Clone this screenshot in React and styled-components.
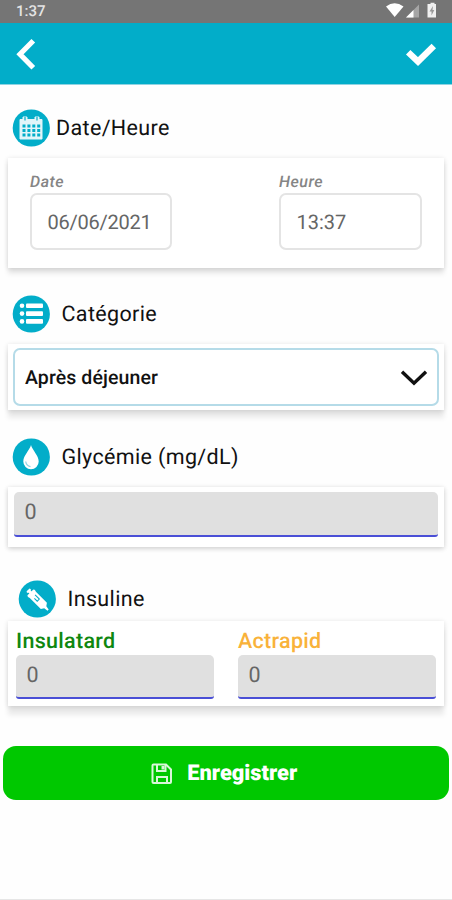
import React from 'react';
import styled, { createGlobalStyle, ThemeProvider } from 'styled-components';

const theme = {
  primary: '#02adc9',
  status: '#757575',
  grey: '#e0e0e0',
  underline: '#4a4fd6',
  success: '#00c800',
};

const GlobalStyle = createGlobalStyle`
  * {
    box-sizing: border-box;
  }

  body {
    margin: 0;
    background: #fefefe;
    font-family: Roboto, 'Liberation Sans', sans-serif;
    text-rendering: geometricPrecision;
  }
`;

const StyledScreen = styled.div`
  display: flex;
  flex-direction: column;
  width: 452px;
  height: 900px;
  overflow: hidden;
  border-bottom: 1px solid #e6e6e6;
`;

const StyledStatusBar = styled.div`
  display: flex;
  justify-content: space-between;
  flex: none;
  height: 23px;
  padding: 0 15px 0 16px;
  background: ${({ theme }) => theme.status};
  color: #e4e4e4;
  font-size: 15px;
  font-weight: 500;
  line-height: 22px;
`;

const StyledHeader = styled.header`
  display: flex;
  justify-content: space-between;
  flex: none;
  height: 62px;
  padding: 15px 14px 0 15px;
  background: ${({ theme }) => theme.primary};
  border-bottom: 1px solid #8fd3e2;
`;

const StyledForm = styled.form`
  display: flex;
  flex-direction: column;
  padding: 0 8px;
`;

const StyledHeading = styled.div`
  display: flex;
  align-items: center;
  gap: ${({ $gap }) => $gap || 11.5}px;
  height: 38px;
  margin: ${({ $margin }) => $margin};
`;

const StyledTitle = styled.h2`
  margin: 0;
  color: #111;
  font-size: 21.5px;
  font-weight: 400;
  line-height: 38px;
  letter-spacing: 0.35px;
  padding-top: 1px;
`;

const StyledCard = styled.section`
  display: flex;
  justify-content: space-between;
  height: ${({ $height }) => $height}px;
  padding: ${({ $padding }) => $padding};
  background: #fff;
  box-shadow: 0 1px 5px rgba(0, 0, 0, 0.14),
    0 ${({ $depth }) => $depth || 6}px 5px rgba(0, 0, 0, 0.08);
`;

const StyledField = styled.div`
  display: flex;
  flex-direction: column;
  width: ${({ $width }) => $width}px;
`;

const StyledLabel = styled.label`
  color: #858585;
  font-size: 16px;
  font-style: italic;
  font-weight: 500;
  line-height: 20px;
  letter-spacing: 0.5px;
`;

const StyledDose = styled.label`
  color: ${({ $color }) => $color};
  font-size: 21.5px;
  font-weight: 500;
  line-height: 30px;
  height: 28px;
  letter-spacing: 0.3px;
`;

const StyledPicker = styled.div`
  height: 57px;
  margin-top: 1px;
  padding-left: 15.5px;
  border: 2px solid #e4e4e4;
  border-radius: 7px;
  color: #666;
  font-size: 20px;
  line-height: 54px;
  letter-spacing: ${({ $spacing }) => $spacing || 0}px;
`;

const StyledSelect = styled.div`
  display: flex;
  align-items: center;
  justify-content: space-between;
  flex: 1;
  padding: 1px 9px 0 10px;
  border: 2px solid #b5dbe8;
  border-radius: 7px;
  color: #111;
  font-size: 19.5px;
  font-weight: 500;
  letter-spacing: 0.1px;
`;

const StyledNumber = styled.div`
  height: ${({ $height }) => $height}px;
  padding-left: 10.5px;
  background: ${({ theme }) => theme.grey};
  border-bottom: 2px solid ${({ theme }) => theme.underline};
  border-radius: 5px 5px 3px 3px;
  color: #666;
  font-size: 21.5px;
  line-height: 42px;
`;

const StyledButton = styled.button`
  display: flex;
  align-items: center;
  justify-content: center;
  gap: 14px;
  height: 54px;
  margin: 39.5px -5px 0 -5.5px;
  padding: 2px 3px 0 0;
  border: 0;
  border-radius: 13px;
  background: ${({ theme }) => theme.success};
  color: #fff;
  font-family: inherit;
  font-size: 21.8px;
  font-weight: 900;
  text-rendering: inherit;
`;

const StatusIcons = () => (
  <svg width="54" height="22" viewBox="0 0 54 22">
    <path d="M3 6.5 Q11.5 0 20.500 6.500 L11.700 17 Z" fill="#fff" />
    <path d="M36 4.500 V17.500 H23 Z" fill="#a5a5a5" />
    <path d="M30.500 10 V17.500 H23 Z" fill="#fff" />
    <path d="M46 4 H47.500 V2.800 H51.500 V4 H53 V17.500 H44.500 V4 Z" fill="#f0f0f0" />
    <path d="M50 6 L46.500 11.500 H48.500 V15.500 L51.300 10 H49.500 Z" fill="#999" />
  </svg>
);

const BackIcon = () => (
  <svg width="24" height="34" viewBox="0 0 24 34">
    <path d="M18.300 2.800 L5 16.300 L18.300 29.800" fill="none" stroke="#fff" strokeWidth="5.200" />
  </svg>
);

const CheckIcon = () => (
  <svg width="34" height="34" viewBox="0 0 34 34">
    <path d="M4.200 14.200 L14 23.500 L29.800 8" fill="none" stroke="#fff" strokeWidth="6.400" />
  </svg>
);

const Badge = ({ children }) => (
  <svg width="38" height="38" viewBox="0 0 38 38">
    <circle cx="19.300" cy="19" r="18.600" fill={theme.primary} />
    {children}
  </svg>
);

const columns = [10.5, 15.4, 20.3, 25.2];
const rows = [15.5, 20, 24.5];

const CalendarIcon = () => (
  <Badge>
    <path
      d="M8 10.500 H11 V8 H15 V10.500 H23 V8 H27 V10.500 H30 V30 H8 Z"
      fill="#e2f5f9"
      stroke="#e2f5f9"
      strokeLinejoin="round"
    />
    <path d="M13 8 V11.500 M25 8 V11.500" stroke={theme.primary} strokeWidth="1.200" />
    {rows.map((y) =>
      columns.map((x) => (
        <rect key={`${x}-${y}`} x={x} y={y} width="3" height="3" fill={theme.primary} />
      ))
    )}
  </Badge>
);

const ListIcon = () => (
  <Badge>
    {[10.8, 18.6, 26.4].map((y) => (
      <g key={y} fill="#fff">
        <circle cx="10" cy={y} r="2.300" />
        <rect x="14" y={y - 2.3} width="17" height="4.600" rx="1" />
      </g>
    ))}
  </Badge>
);

const DropIcon = () => (
  <Badge>
    <path
      d="M19 7 C17.800 12 11.300 17.500 11.300 23.500 A7.700 7.700 0 0 0 26.700 23.500 C26.700 17.500 20.200 12 19 7 Z"
      fill="#fff"
    />
    <path d="M13.700 23.500 Q14.300 27.800 18.500 28.700" fill="none" stroke="#8fd3e2" strokeWidth="1.200" />
  </Badge>
);

const SyringeIcon = () => (
  <Badge>
    <g transform="translate(19.500 19.500) rotate(45)" fill="#fff">
      <rect x="-13.500" y="-2.500" width="2.200" height="5" rx="1" />
      <rect x="-12.500" y="-1.500" width="4" height="3" />
      <rect x="-10" y="-4.800" width="3" height="9.600" rx="1" />
      <path d="M-8 -4.300 H9 L11 -1.500 L15 -0.800 V0.800 L11 1.500 L9 4.300 H-8 Z" />
      <path d="M-5 -1.600 H1 V1.400 H-3" fill="none" stroke={theme.primary} strokeWidth="1" />
    </g>
  </Badge>
);

const ChevronIcon = () => (
  <svg width="28" height="18" viewBox="0 0 28 18">
    <path d="M2 2.700 L14 14.200 L26 2.700" fill="none" stroke="#111" strokeWidth="3.400" />
  </svg>
);

const SaveIcon = () => (
  <svg width="22" height="22" viewBox="0 0 22 22" fill="none" stroke="#d9f7d9" strokeWidth="2">
    <path d="M2.500 1.500 H15 L20 6.500 V19 Q20 20 19 20 H2.500 Q1.500 20 1.500 19 V2.500 Q1.500 1.500 2.500 1.500 Z" />
    <path d="M6 1.500 V8 H14.500 V1.500" />
    <path d="M6 20 V14 H16 V20" />
    <path d="M12 3 V6.500" strokeWidth="3" />
  </svg>
);

const App = () => {
  return (
    <ThemeProvider theme={theme}>
      <GlobalStyle />
      <StyledScreen>
        <StyledStatusBar>
          <span>1:37</span>
          <StatusIcons />
        </StyledStatusBar>
        <StyledHeader>
          <BackIcon />
          <CheckIcon />
        </StyledHeader>
        <StyledForm>
          <StyledHeading $gap={6} $margin="24px 0 11px 4px">
            <CalendarIcon />
            <StyledTitle>Date/Heure</StyledTitle>
          </StyledHeading>
          <StyledCard $height={110} $padding="14px 22px 0 22px">
            <StyledField $width={142}>
              <StyledLabel>Date</StyledLabel>
              <StyledPicker $spacing={-0.25}>06/06/2021</StyledPicker>
            </StyledField>
            <StyledField $width={143}>
              <StyledLabel>Heure</StyledLabel>
              <StyledPicker>13:37</StyledPicker>
            </StyledField>
          </StyledCard>
          <StyledHeading $margin="27px 0 11px 4px">
            <ListIcon />
            <StyledTitle>Catégorie</StyledTitle>
          </StyledHeading>
          <StyledCard $height={66} $padding="4px 5px" $depth={8}>
            <StyledSelect>
              <span>Après déjeuner</span>
              <ChevronIcon />
            </StyledSelect>
          </StyledCard>
          <StyledHeading $margin="28px 0 11px 4px">
            <DropIcon />
            <StyledTitle>Glycémie (mg/dL)</StyledTitle>
          </StyledHeading>
          <StyledCard $height={60} $padding="5px 6px 0 6px" $depth={2}>
            <StyledField $width={424}>
              <StyledNumber $height={45}>0</StyledNumber>
            </StyledField>
          </StyledCard>
          <StyledHeading $margin="33px 0 3px 10px">
            <SyringeIcon />
            <StyledTitle>Insuline</StyledTitle>
          </StyledHeading>
          <StyledCard $height={85} $padding="6px 8px 0 8px" $depth={9}>
            <StyledField $width={198}>
              <StyledDose $color="#0f870f">Insulatard</StyledDose>
              <StyledNumber $height={44}>0</StyledNumber>
            </StyledField>
            <StyledField $width={198}>
              <StyledDose $color="#f9b23a">Actrapid</StyledDose>
              <StyledNumber $height={44}>0</StyledNumber>
            </StyledField>
          </StyledCard>
          <StyledButton type="button">
            <SaveIcon />
            Enregistrer
          </StyledButton>
        </StyledForm>
      </StyledScreen>
    </ThemeProvider>
  );
};

export default App;
